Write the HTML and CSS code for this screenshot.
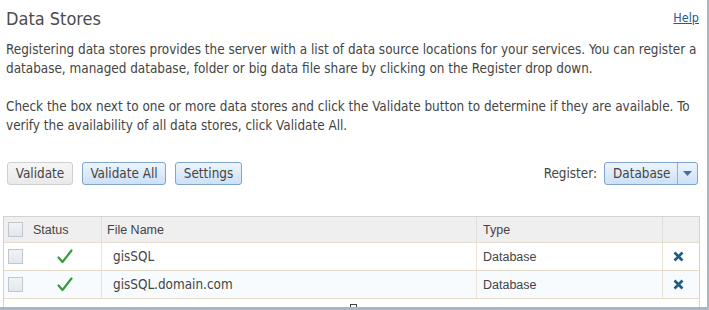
FILE: index.html
```html
<!DOCTYPE html>
<html>
<head>
<meta charset="utf-8">
<link rel="stylesheet" href="styles.css">
</head>
<body>
<div class="frame">
  <div class="head">
    <h1 class="title">Data Stores</h1>
    <a class="help" href="#">Help</a>
  </div>
  <p class="intro">Registering data stores provides the server with a list of data source locations for your services. You can register a database, managed database, folder or big data file share by clicking on the Register drop down.</p>
  <p class="intro">Check the box next to one or more data stores and click the Validate button to determine if they are available. To verify the availability of all data stores, click Validate All.</p>
  <div class="toolbar">
    <div class="btns">
      <button class="btn gray">Validate</button>
      <button class="btn blue">Validate All</button>
      <button class="btn blue">Settings</button>
    </div>
    <div class="register">
      <span class="reg-label">Register:</span>
      <div class="dropdown">
        <span class="dd-text">Database</span>
        <span class="dd-arrow"><svg width="9" height="5" viewBox="0 0 9 5"><path d="M0 0h9L4.5 5z" fill="#4a6f96"/></svg></span>
      </div>
    </div>
  </div>
  <div class="grid">
    <div class="row header">
      <div class="c c-chk"><span class="box"></span></div>
      <div class="c c-status">Status</div>
      <div class="c c-name">File Name</div>
      <div class="c c-type">Type</div>
      <div class="c c-act"></div>
    </div>
    <div class="row">
      <div class="c c-chk"><span class="box"></span></div>
      <div class="c c-status"><svg class="check" width="16" height="15" viewBox="0 0 16 15"><path d="M1.5 8.5 L5.5 13 L14.5 1.5" fill="none" stroke="#3a9a3e" stroke-width="2.2" stroke-linecap="round" stroke-linejoin="round"/></svg></div>
      <div class="c c-name cell-t">gisSQL</div>
      <div class="c c-type">Database</div>
      <div class="c c-act"><svg width="11" height="11" viewBox="0 0 11 11"><path d="M1.5 1.5l8 8M9.5 1.5l-8 8" stroke="#1f5b87" stroke-width="2.6" stroke-linecap="butt"/></svg></div>
    </div>
    <div class="row alt">
      <div class="c c-chk"><span class="box"></span></div>
      <div class="c c-status"><svg class="check" width="16" height="15" viewBox="0 0 16 15"><path d="M1.5 8.5 L5.5 13 L14.5 1.5" fill="none" stroke="#3a9a3e" stroke-width="2.2" stroke-linecap="round" stroke-linejoin="round"/></svg></div>
      <div class="c c-name cell-t">gisSQL.domain.com</div>
      <div class="c c-type">Database</div>
      <div class="c c-act"><svg width="11" height="11" viewBox="0 0 11 11"><path d="M1.5 1.5l8 8M9.5 1.5l-8 8" stroke="#1f5b87" stroke-width="2.6" stroke-linecap="butt"/></svg></div>
    </div>
  </div>
  <span class="handle"></span>
</div>
</body>
</html>
```
FILE: styles.css
```css
html, body { margin: 0; padding: 0; background: #fff; }
.frame {
  position: relative;
  width: 707px;
  height: 307px;
  border-right: 2px solid #a8b6c6;
  border-bottom: 3px solid #a8b6c6;
  overflow: hidden;
  font-family: "DejaVu Sans Condensed", "DejaVu Sans", sans-serif;
  color: #454545;
}
.head {
  display: flex;
  justify-content: space-between;
  align-items: flex-start;
  padding: 9px 8px 0 6px;
}
.title {
  margin: 0;
  font-size: 18px;
  font-weight: normal;
  color: #4d4d4d;
  line-height: 20px;
}
.help {
  font-size: 12.5px;
  color: #245c8f;
  text-decoration: underline;
  line-height: 16px;
  margin-top: 1px;
}
.intro {
  margin: 11px 0 0 6px;
  font-size: 13.4px;
  line-height: 19px;
  width: 702px;
  color: #444;
}
.intro + .intro { margin-top: 19px; }
.toolbar {
  display: flex;
  justify-content: space-between;
  align-items: center;
  margin: 27px 0 0 7px;
  padding-right: 9px;
}
.btns { display: flex; gap: 9px; }
.btn {
  height: 23px;
  padding: 0;
  font-family: "DejaVu Sans Condensed", "DejaVu Sans", sans-serif;
  font-size: 13.4px;
  color: #444;
  border-radius: 3px;
  cursor: pointer;
}
.btn.gray {
  border: 1px solid #cfcfcf;
  background: linear-gradient(#f6f6f6, #e9e9e9);
  width: 66px;
}
.btn.blue {
  border: 1px solid #7fa5cc;
  background: linear-gradient(#edf5fd, #cde0f5);
}
.btn.blue:nth-child(2) { width: 84px; }
.btn.blue:nth-child(3) { width: 67px; }
.register { display: flex; align-items: center; gap: 7px; }
.reg-label { font-size: 13.4px; color: #444; }
.dropdown {
  display: flex;
  height: 21px;
  border: 1px solid #7fa5cc;
  border-radius: 3px;
  background: linear-gradient(#edf5fd, #cde0f5);
  width: 92px;
}
.dd-text {
  flex: 1;
  font-size: 13.4px;
  line-height: 21px;
  padding-left: 8px;
  border-right: 1px solid #8fb1d3;
}
.dd-arrow {
  width: 19px;
  display: flex;
  align-items: center;
  justify-content: center;
}
.grid {
  margin: 31px 0 0 3px;
  width: 695px;
  border: 1px solid #d3d3d3;
  border-bottom: none;
  height: 100px;
}
.row {
  display: grid;
  grid-template-columns: 25px 73px 375px 186px 1fr;
  height: 27px;
  border-bottom: 1px solid #e6dccb;
}
.row.header {
  height: 25px;
  background: #efefef;
  border-bottom: 1px solid #e3dccf;
  font-family: "Liberation Sans", Arial, sans-serif;
  font-size: 12.5px;
  color: #444;
}
.row.alt { background: #f7fbfe; }
.c {
  display: flex;
  align-items: center;
  padding-left: 6px;
  border-right: 1px solid #eae2d5;
  font-family: "Liberation Sans", Arial, sans-serif;
  font-size: 12.5px;
  color: #444;
}
.header .c { border-right-color: #dedede; }
.c-chk { padding-left: 4px; border-right: none; }
.header .c-status { padding-left: 4px; }
.c-name { padding-left: 5px; }
.cell-t { font-family: "DejaVu Sans Condensed", "DejaVu Sans", sans-serif; font-size: 13.4px; padding-left: 11px; }
.c-act { border-right: none; padding-left: 10px; }
.row:not(.header) .c-status { justify-content: center; padding-left: 0; }
.box {
  width: 13px;
  height: 13px;
  border: 1px solid #bfc6cf;
  background: linear-gradient(#f0f3f7, #e3e8ee);
}
.handle {
  position: absolute;
  left: 350px;
  bottom: -1px;
  width: 5px;
  height: 3px;
  border: 1px solid #444;
  border-bottom: none;
  background: #fff;
}
```
